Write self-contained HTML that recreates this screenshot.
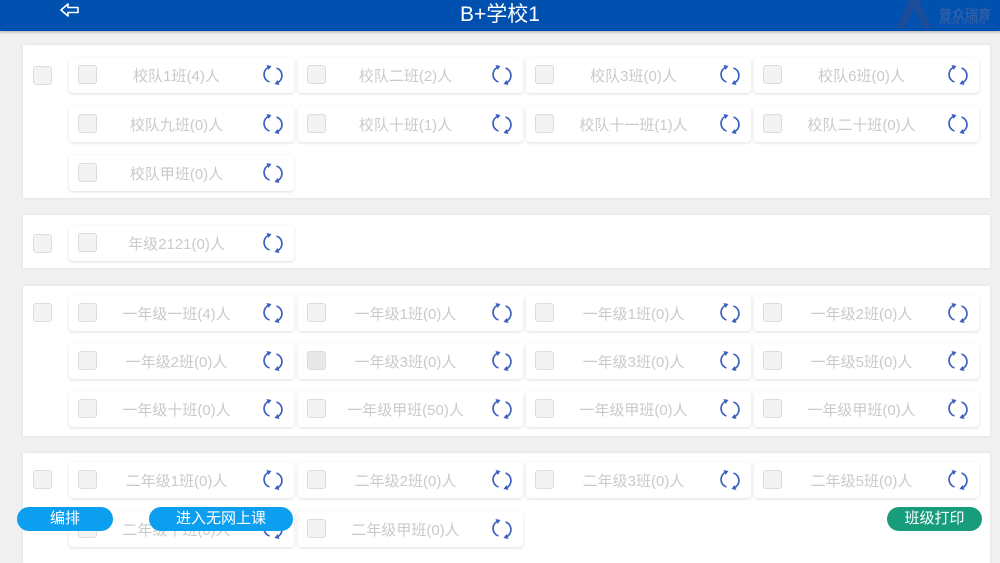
<!DOCTYPE html>
<html><head><meta charset="utf-8"><style>
*{margin:0;padding:0;box-sizing:border-box}
body{width:1000px;height:550px;overflow:hidden;background:#f0f0f0;font-family:"Liberation Sans","Noto Sans CJK SC",sans-serif;position:relative}
.hd{position:absolute;left:0;top:0;width:1000px;height:31px;background:#0050b0;box-shadow:0 1px 3px rgba(0,0,0,.3)}
.hd .t{position:absolute;left:0;width:1000px;top:-2px;text-align:center;color:#fff;font-size:21px}
.p{position:absolute;left:23px;width:967px;background:#fff;box-shadow:0 0 3px rgba(0,0,0,.08)}
.cb{position:absolute;width:19px;height:19px;border:1px solid #dcdcdc;border-radius:3px;background:#f3f3f3}
.it{position:absolute;width:225px;height:36px;background:#fff;border-radius:4px;box-shadow:0 1px 3px rgba(0,0,0,.13)}
.it .cb{left:9px;top:8px}
.it span{position:absolute;left:35px;width:145px;top:8px;text-align:center;color:#cacaca;font-size:15px;white-space:nowrap}
.it svg{position:absolute;left:193px;top:7px}
.btn{position:absolute;top:507px;height:24px;border-radius:12px;color:#fff;font-size:15px;text-align:center;line-height:24px}
</style></head><body>
<div class="hd"><svg style="position:absolute;left:59px;top:1px" width="22" height="18" viewBox="0 0 22 18"><path d="M2 9 L9 3 V6.5 H19 V11.5 H9 V15 Z" fill="none" stroke="#fff" stroke-width="1.6" stroke-linejoin="round"/></svg>
<div class="t">B+学校1</div>
<svg style="position:absolute;left:895px;top:0" width="42" height="28"><path d="M2 28 L14 0 H24 L36 28 H28 L19 8 L10 28Z" fill="#1d4d98"/></svg>
<div style="position:absolute;left:939px;top:4px;color:#2f5ea8;font-size:13px;font-weight:bold">普众瑞育</div>
<div style="position:absolute;left:939px;top:20px;color:#2f5ea8;font-size:6px;font-weight:bold">APLUS SPORTS</div>
</div>
<svg width="0" height="0" style="position:absolute"><defs><g id="r"><path d="M7 3 A8 8 0 0 0 7.5 18" fill="none" stroke="#3b5fc0" stroke-width="1.7"/><path d="M15 19 A8 8 0 0 0 14.5 4" fill="none" stroke="#3b5fc0" stroke-width="1.7"/><path d="M4.5 1 L9.5 2 L6.5 6Z M17.5 21 L12.5 20 L15.5 16Z" fill="#3b5fc0"/></g></defs></svg>

<div class="p" style="top:45px;height:153px"><div class="cb" style="left:10px;top:21px"></div></div>
<div class="p" style="top:215px;height:53px"><div class="cb" style="left:10px;top:19px"></div></div>
<div class="p" style="top:286px;height:150px"><div class="cb" style="left:10px;top:17px"></div></div>
<div class="p" style="top:453px;height:110px"><div class="cb" style="left:10px;top:17px"></div></div>

<div class="it" style="left:69px;top:57px"><div class="cb"></div><span>校队1班(4)人</span><svg width="22" height="22"><use href="#r"/></svg></div>
<div class="it" style="left:298px;top:57px"><div class="cb"></div><span>校队二班(2)人</span><svg width="22" height="22"><use href="#r"/></svg></div>
<div class="it" style="left:526px;top:57px"><div class="cb"></div><span>校队3班(0)人</span><svg width="22" height="22"><use href="#r"/></svg></div>
<div class="it" style="left:754px;top:57px"><div class="cb"></div><span>校队6班(0)人</span><svg width="22" height="22"><use href="#r"/></svg></div>
<div class="it" style="left:69px;top:106px"><div class="cb"></div><span>校队九班(0)人</span><svg width="22" height="22"><use href="#r"/></svg></div>
<div class="it" style="left:298px;top:106px"><div class="cb"></div><span>校队十班(1)人</span><svg width="22" height="22"><use href="#r"/></svg></div>
<div class="it" style="left:526px;top:106px"><div class="cb"></div><span>校队十一班(1)人</span><svg width="22" height="22"><use href="#r"/></svg></div>
<div class="it" style="left:754px;top:106px"><div class="cb"></div><span>校队二十班(0)人</span><svg width="22" height="22"><use href="#r"/></svg></div>
<div class="it" style="left:69px;top:155px"><div class="cb"></div><span>校队甲班(0)人</span><svg width="22" height="22"><use href="#r"/></svg></div>

<div class="it" style="left:69px;top:225px"><div class="cb"></div><span>年级2121(0)人</span><svg width="22" height="22"><use href="#r"/></svg></div>

<div class="it" style="left:69px;top:295px"><div class="cb"></div><span>一年级一班(4)人</span><svg width="22" height="22"><use href="#r"/></svg></div>
<div class="it" style="left:298px;top:295px"><div class="cb"></div><span>一年级1班(0)人</span><svg width="22" height="22"><use href="#r"/></svg></div>
<div class="it" style="left:526px;top:295px"><div class="cb"></div><span>一年级1班(0)人</span><svg width="22" height="22"><use href="#r"/></svg></div>
<div class="it" style="left:754px;top:295px"><div class="cb"></div><span>一年级2班(0)人</span><svg width="22" height="22"><use href="#r"/></svg></div>
<div class="it" style="left:69px;top:343px"><div class="cb"></div><span>一年级2班(0)人</span><svg width="22" height="22"><use href="#r"/></svg></div>
<div class="it" style="left:298px;top:343px"><div class="cb" style="background:#e8e8e8"></div><span>一年级3班(0)人</span><svg width="22" height="22"><use href="#r"/></svg></div>
<div class="it" style="left:526px;top:343px"><div class="cb"></div><span>一年级3班(0)人</span><svg width="22" height="22"><use href="#r"/></svg></div>
<div class="it" style="left:754px;top:343px"><div class="cb"></div><span>一年级5班(0)人</span><svg width="22" height="22"><use href="#r"/></svg></div>
<div class="it" style="left:69px;top:391px"><div class="cb"></div><span>一年级十班(0)人</span><svg width="22" height="22"><use href="#r"/></svg></div>
<div class="it" style="left:298px;top:391px"><div class="cb"></div><span>一年级甲班(50)人</span><svg width="22" height="22"><use href="#r"/></svg></div>
<div class="it" style="left:526px;top:391px"><div class="cb"></div><span>一年级甲班(0)人</span><svg width="22" height="22"><use href="#r"/></svg></div>
<div class="it" style="left:754px;top:391px"><div class="cb"></div><span>一年级甲班(0)人</span><svg width="22" height="22"><use href="#r"/></svg></div>

<div class="it" style="left:69px;top:462px"><div class="cb"></div><span>二年级1班(0)人</span><svg width="22" height="22"><use href="#r"/></svg></div>
<div class="it" style="left:298px;top:462px"><div class="cb"></div><span>二年级2班(0)人</span><svg width="22" height="22"><use href="#r"/></svg></div>
<div class="it" style="left:526px;top:462px"><div class="cb"></div><span>二年级3班(0)人</span><svg width="22" height="22"><use href="#r"/></svg></div>
<div class="it" style="left:754px;top:462px"><div class="cb"></div><span>二年级5班(0)人</span><svg width="22" height="22"><use href="#r"/></svg></div>
<div class="it" style="left:69px;top:511px"><div class="cb"></div><span>二年级十班(0)人</span><svg width="22" height="22"><use href="#r"/></svg></div>
<div class="it" style="left:298px;top:511px"><div class="cb"></div><span>二年级甲班(0)人</span><svg width="22" height="22"><use href="#r"/></svg></div>

<div class="btn" style="left:17px;width:96px;background:#0c9eef">编排</div>
<div class="btn" style="left:149px;width:144px;background:#0c9eef">进入无网上课</div>
<div class="btn" style="left:887px;width:95px;background:#179c7c">班级打印</div>
</body></html>
